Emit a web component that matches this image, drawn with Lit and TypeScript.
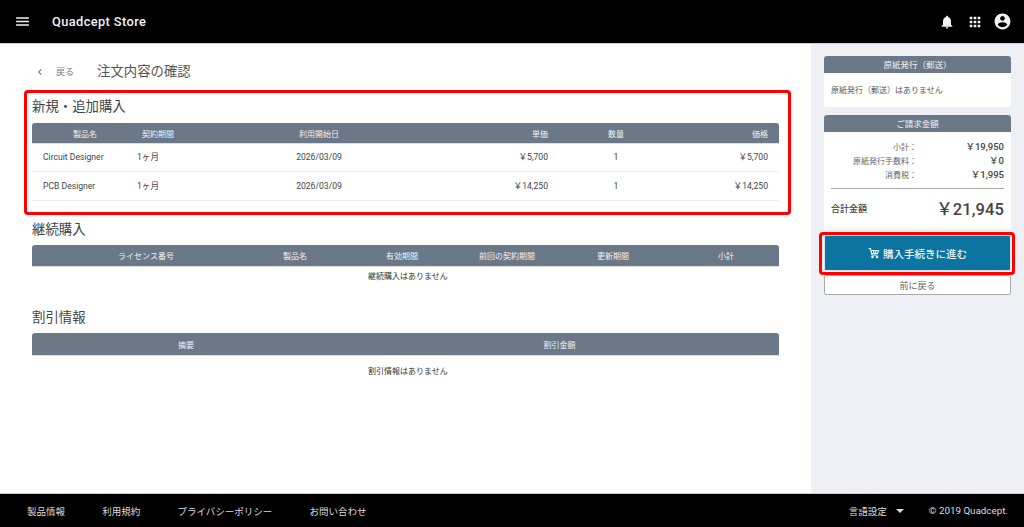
import { LitElement, html, css } from "lit";
import { customElement } from "lit/decorators.js";

@customElement("app-root")
export class AppRoot extends LitElement {
  static styles = css`
    :host {
      display: flex; flex-direction: column; height: 527px; width: 1024px; overflow: hidden;
      font-family: Roboto, "Noto Sans CJK JP", sans-serif; color: #444; background: #fff; position: relative;
    }
    * { box-sizing: border-box; }
    header {
      height: 43px; flex: none; background: #000; color: #f2f2f2; display: flex; align-items: center;
      padding: 0 8px 0 14px; box-shadow: 0 1px 0 #ccc; position: relative;
    }
    .brand { margin-left: 21px; font-size: 12.8px; font-weight: 500; letter-spacing: 0.4px; flex: 1; }
    .hicons { display: flex; align-items: center; }
    .hicons span { width: 27.5px; display: flex; justify-content: center; }
    svg { display: block; fill: currentColor; }
    .body { flex: 1; display: flex; min-height: 0; }
    main { flex: 1; padding: 20px 32px 0; min-width: 0; position: relative; }
    aside { width: 213px; flex: none; background: #eef0f6; padding: 13px 13px 0; }
    .crumb { display: flex; align-items: center; height: 17px; }
    .back { color: #777; font-size: 9px; display: flex; align-items: center; width: 65px; gap: 10px; padding-left: 2px; }
    .back svg { color: #666; }
    h1 { font-size: 13.4px; font-weight: 400; margin: 0; color: #555; line-height: 17px; }
    h2 { font-size: 13.4px; font-weight: 400; margin: 0; color: #444; line-height: 17px; }
    .sec1 { margin-top: 18px; }
    .sec2 { margin-top: 20px; }
    .sec3 { margin-top: 27px; }
    .table { margin-top: 8px; font-size: 8.6px; }
    .sec2 + .table, .sec3 + .table { margin-top: 7px; }
    .row { display: grid; align-items: center; }
    .head {
      background: #6a7888; color: #f0f2f5; border-radius: 3px 3px 0 0; font-size: 8px; text-align: center;
      box-shadow: 0 1px 0 #ddd;
    }
    .t1 .row { grid-template-columns: 95px 62px 260px 110px 114px 106px; }
    .t1 .head { height: 20px; }
    .t1 .item { height: 29px; border-bottom: 1px solid #eee; color: #444; line-height: 12px; padding-bottom: 1px; }
    .t1 .name { padding-left: 11px; }
    .t1 .term { padding-left: 10px; }
    .t1 .hname { padding-left: 11px; }
    .c { text-align: center; }
    .r { text-align: right; padding-right: 11px; }
    .t2 .row { grid-template-columns: 228px 70px 144px 66px 146px 93px; }
    .t2 .head { height: 21px; }
    .t2 .last { padding-right: 13px; }
    .t3 .row { grid-template-columns: 308px 439px; }
    .t3 .head { height: 22px; }
    .empty { text-align: center; font-size: 8px; color: #333; padding-left: 5px; line-height: 10px; }
    .t2 .empty { margin-top: 6px; }
    .t3 .empty { margin-top: 12px; }
    .card { background: #fff; border-radius: 3px; margin-bottom: 8px; font-size: 8px; }
    .chead {
      background: #6a7888; color: #f0f2f5; height: 17px; border-radius: 3px 3px 0 0; display: flex;
      align-items: center; justify-content: center; font-size: 8.5px; padding-bottom: 2px;
    }
    .cbody1 { height: 34px; padding: 0 7px 2px; display: flex; align-items: center; color: #555; }
    .cbody2 { height: 97px; padding: 7px 7px 0; }
    .sum { display: grid; grid-template-columns: 86px 1fr; align-items: center; height: 14px; color: #666; }
    .sum span:first-child { text-align: right; }
    .sum b { text-align: right; font-size: 9.5px; font-weight: 500; color: #444; }
    hr { border: 0; border-top: 1px solid #aaa; margin: 7px 0 0; }
    .total { display: flex; justify-content: space-between; align-items: center; height: 38px; }
    .total span { font-size: 9px; font-weight: 500; color: #444; }
    .total b { font-size: 16.5px; font-weight: 500; color: #444; letter-spacing: 0.1px; }
    .buy {
      height: 36px; margin-top: -2px; background: #0b74a0; border: 1px solid #d8e4ea; border-radius: 2px; color: #eef5f8; font-size: 10.5px;
      display: flex; align-items: center; justify-content: center; gap: 3px; font-weight: 500;
    }
    .buy svg { fill: none; stroke: currentColor; stroke-width: 2.4; }
    .prev {
      height: 20px; margin-top: 4px; background: #fff; border: 1px solid #aaa; border-radius: 2px; color: #666;
      font-size: 9px; display: flex; align-items: center; justify-content: center;
    }
    footer {
      height: 33px; flex: none; background: #000; color: #ddd; display: flex; align-items: center; font-size: 9.5px;
      padding: 0 16px 0 27px; box-shadow: 0 -1px 0 #ccc; position: relative;
    }
    .links { display: flex; gap: 37.2px; flex: 1; }
    .lang { display: flex; align-items: center; gap: 9px; margin-right: 25px; }
    .caret { width: 0; height: 0; border-left: 4px solid transparent; border-right: 4px solid transparent; border-top: 4px solid #ddd; }
    .copy { font-size: 9.8px; }
    .mark { position: absolute; border: 3px solid #f00; border-radius: 4px; pointer-events: none; }
    .m1 { left: 24px; top: 90px; width: 767px; height: 125px; }
    .m2 { left: 819px; top: 232px; width: 196px; height: 43px; }
  `;

  render() {
    return html`
      <header>
        <svg width="17" height="17" viewBox="0 0 24 24"><path d="M3 18h18v-2H3v2zm0-5h18v-2H3v2zm0-7v2h18V6H3z"/></svg>
        <div class="brand">Quadcept Store</div>
        <div class="hicons">
          <span><svg width="16" height="16" viewBox="0 0 24 24"><path d="M12 22c1.1 0 2-.9 2-2h-4c0 1.1.9 2 2 2zm6-6v-5c0-3.07-1.63-5.64-4.5-6.32V4c0-.83-.67-1.5-1.5-1.5s-1.5.67-1.5 1.5v.68C7.64 5.36 6 7.92 6 11v5l-2 2v1h16v-1l-2-2z"/></svg></span>
          <span><svg width="16" height="16" viewBox="0 0 24 24"><path d="M4 8h4V4H4v4zm6 12h4v-4h-4v4zm-6 0h4v-4H4v4zm0-6h4v-4H4v4zm6 0h4v-4h-4v4zm6-10v4h4V4h-4zm-6 4h4V4h-4v4zm6 6h4v-4h-4v4zm0 6h4v-4h-4v4z"/></svg></span>
          <span><svg width="19" height="19" viewBox="0 0 24 24"><path d="M12 2C6.48 2 2 6.48 2 12s4.48 10 10 10 10-4.48 10-10S17.52 2 12 2zm0 3c1.66 0 3 1.34 3 3s-1.34 3-3 3-3-1.34-3-3 1.34-3 3-3zm0 14.2c-2.5 0-4.71-1.28-6-3.22.03-1.99 4-3.08 6-3.08 1.99 0 5.97 1.09 6 3.08-1.29 1.94-3.5 3.22-6 3.22z"/></svg></span>
        </div>
      </header>
      <div class="body">
        <main>
          <div class="crumb">
            <div class="back">
              <svg width="12" height="12" viewBox="0 0 24 24"><path d="M15.41 7.41 14 6l-6 6 6 6 1.41-1.41L10.83 12z"/></svg>
              <span>戻る</span>
            </div>
            <h1>注文内容の確認</h1>
          </div>
          <h2 class="sec1">新規・追加購入</h2>
          <div class="table t1">
            <div class="row head">
              <span class="hname">製品名</span><span>契約期間</span><span>利用開始日</span>
              <span class="r">単価</span><span>数量</span><span class="r">価格</span>
            </div>
            ${[["Circuit Designer", "￥5,700"], ["PCB Designer", "￥14,250"]].map(
              ([n, p]) => html`<div class="row item">
                <span class="name">${n}</span><span class="term">1ヶ月</span><span class="c">2026/03/09</span>
                <span class="r">${p}</span><span class="c">1</span><span class="r">${p}</span>
              </div>`
            )}
          </div>
          <h2 class="sec2">継続購入</h2>
          <div class="table t2">
            <div class="row head">
              <span>ライセンス番号</span><span>製品名</span><span>有効期間</span><span>前回の契約期間</span><span>更新期間</span><span class="last">小計</span>
            </div>
            <div class="empty">継続購入はありません</div>
          </div>
          <h2 class="sec3">割引情報</h2>
          <div class="table t3">
            <div class="row head"><span>摘要</span><span>割引金額</span></div>
            <div class="empty">割引情報はありません</div>
          </div>
        </main>
        <aside>
          <div class="card">
            <div class="chead">原紙発行（郵送）</div>
            <div class="cbody1">原紙発行（郵送）はありません</div>
          </div>
          <div class="card">
            <div class="chead">ご請求金額</div>
            <div class="cbody2">
              <div class="sum"><span>小計：</span><b>￥19,950</b></div>
              <div class="sum"><span>原紙発行手数料：</span><b>￥0</b></div>
              <div class="sum"><span>消費税：</span><b>￥1,995</b></div>
              <hr />
              <div class="total"><span>合計金額</span><b>￥21,945</b></div>
            </div>
          </div>
          <div class="buy">
            <svg width="12" height="12" viewBox="0 0 24 24"><path d="M1 3h4l3 13h11M6 7h15l-2 6H8M11 7l1 6M16 7l-1 6"/><circle cx="9" cy="20" r="1.5"/><circle cx="18" cy="20" r="1.5"/></svg>
            <span>購入手続きに進む</span>
          </div>
          <div class="prev">前に戻る</div>
        </aside>
      </div>
      <footer>
        <div class="links"><span>製品情報</span><span>利用規約</span><span>プライバシーポリシー</span><span>お問い合わせ</span></div>
        <div class="lang"><span>言語設定</span><i class="caret"></i></div>
        <div class="copy">© 2019 Quadcept.</div>
      </footer>
      <div class="mark m1"></div>
      <div class="mark m2"></div>
    `;
  }
}
